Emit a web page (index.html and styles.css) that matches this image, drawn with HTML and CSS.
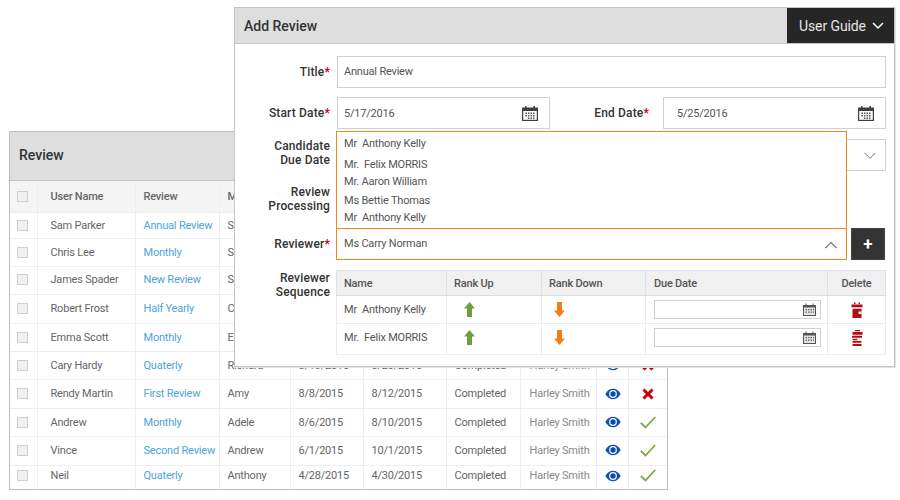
FILE: index.html
```html
<!DOCTYPE html>
<html lang="en">
<head>
<meta charset="utf-8">
<title>Add Review</title>
<link rel="stylesheet" href="styles.css">
</head>
<body>
<svg class="defs" width="0" height="0" aria-hidden="true">
  <symbol id="eye" viewBox="0 0 16 12"><path fill="#0c4eb0" d="M0.3 6C2.5 2.4 5 .8 8 .8s5.5 1.6 7.7 5.2c-2.2 3.6-4.7 5.2-7.700 5.200S2.500 9.600.3 6z"/><circle cx="8" cy="6" r="3.900" fill="#fff"/><circle cx="8" cy="6" r="2.700" fill="#0c4eb0"/></symbol>
  <symbol id="cross" viewBox="0 0 12 12"><path fill="none" stroke="#c8000a" stroke-width="3" d="M1.500 1.500l9 9m0-9l-9 9"/></symbol>
  <symbol id="check" viewBox="0 0 16 13"><path fill="none" stroke="#7aaa3c" stroke-width="1.800" d="M.8 6.800l4.700 4.700L15.200 1"/></symbol>
  <symbol id="cal" viewBox="0 0 16 16"><path fill="#3f3f3f" d="M0 2.500h3V1h1.500v1.500h7V1H13v1.500h3V16H0z"/><path fill="#fff" d="M1.200 6h13.600v8.800H1.200z"/><path fill="#555" d="M3.500 7.500h1.500V9H3.500zM6 7.500h1.500V9H6zM8.500 7.500H10V9H8.500zM11 7.500h1.500V9H11zM3.500 10h1.500v1.500H3.500zM6 10h1.500v1.500H6zM8.500 10H10v1.500H8.500zM11 10h1.500v1.500H11zM6 12.500h1.500V14H6zM8.500 12.500H10V14H8.500zM11 12.500h1.500V14H11z"/></symbol>
  <symbol id="cal-small" viewBox="0 0 13 13"><path fill="#555" d="M0 2h2.500V.5h1V2h6V.5h1V2H13v11H0z"/><path fill="#e3e3e3" d="M1 4.500h11V12H1z"/><path fill="#666" d="M2.500 6h1.500v1.300H2.500zM5 6h1.500v1.300H5zM7.500 6H9v1.300H7.500zM10 6h1.200v1.300H10zM2.500 8.500h1.500v1.300H2.500zM5 8.500h1.500v1.300H5zM7.500 8.500H9v1.300H7.500zM10 8.500h1.200v1.300H10z"/></symbol>
  <symbol id="up" viewBox="0 0 11 15"><path fill="#70a03a" d="M5.500 0L11 6.500H8V15H3V6.500H0z"/></symbol>
  <symbol id="down" viewBox="0 0 11 15"><path fill="#f57c14" d="M3 0h5v8.500h3L5.500 15 0 8.500h3z"/></symbol>
  <symbol id="bin-a" viewBox="0 0 12 16"><path fill="#b40a14" d="M3 .5h1.500V2H3zM7.500 .5H9V2H7.500zM.5 2.500h11v2.700H.5zM1.500 6.700h9V16h-9z"/><path fill="#fff" d="M7.500 9.500h3v2.500h-3z"/></symbol>
  <symbol id="bin-b" viewBox="0 0 12 16"><path fill="#b40a14" d="M4 0h5v1.200H4zM1.500 2h10v2.800h-10zM1 5.800h10v2H1zM1.500 8.800h5v1.400h-5zM1.500 11h9v1.800h-9zM1.500 14h9v2h-9z"/></symbol>
</svg>

<main class="stage">
  <section class="panel panel-back">
    <h2 class="panel-title">Review</h2>
    <table class="grid">
      <colgroup><col class="c-box"><col class="c-user"><col class="c-review"><col class="c-mgr"><col class="c-start"><col class="c-end"><col class="c-status"><col class="c-owner"><col class="c-eye"><col class="c-state"></colgroup>
      <thead>
        <tr><th><span class="box"></span></th><th>User Name</th><th>Review</th><th>Manager</th><th>Start Date</th><th>End Date</th><th>Status</th><th>Owner</th><th>View</th><th>Done</th></tr>
      </thead>
      <tbody>
        <tr><td><span class="box"></span></td><td>Sam Parker</td><td class="link">Annual Review</td><td>Steve</td><td>8/13/2015</td><td>8/20/2015</td><td>Completed</td><td class="owner">Harley Smith</td><td class="mid"><svg class="i-eye"><use href="#eye"/></svg></td><td class="mid"><svg class="i-check"><use href="#check"/></svg></td></tr>
        <tr><td><span class="box"></span></td><td>Chris Lee</td><td class="link">Monthly</td><td>Sara</td><td>8/13/2015</td><td>8/20/2015</td><td>Completed</td><td class="owner">Harley Smith</td><td class="mid"><svg class="i-eye"><use href="#eye"/></svg></td><td class="mid"><svg class="i-check"><use href="#check"/></svg></td></tr>
        <tr><td><span class="box"></span></td><td>James Spader</td><td class="link">New Review</td><td>Sean</td><td>8/13/2015</td><td>8/20/2015</td><td>Completed</td><td class="owner">Harley Smith</td><td class="mid"><svg class="i-eye"><use href="#eye"/></svg></td><td class="mid"><svg class="i-check"><use href="#check"/></svg></td></tr>
        <tr><td><span class="box"></span></td><td>Robert Frost</td><td class="link">Half Yearly</td><td>Chris</td><td>8/13/2015</td><td>8/20/2015</td><td>Completed</td><td class="owner">Harley Smith</td><td class="mid"><svg class="i-eye"><use href="#eye"/></svg></td><td class="mid"><svg class="i-check"><use href="#check"/></svg></td></tr>
        <tr><td><span class="box"></span></td><td>Emma Scott</td><td class="link">Monthly</td><td>Ella</td><td>8/13/2015</td><td>8/20/2015</td><td>Completed</td><td class="owner">Harley Smith</td><td class="mid"><svg class="i-eye"><use href="#eye"/></svg></td><td class="mid"><svg class="i-check"><use href="#check"/></svg></td></tr>
        <tr><td><span class="box"></span></td><td>Cary Hardy</td><td class="link">Quaterly</td><td>Richard</td><td>8/13/2015</td><td>8/20/2015</td><td>Completed</td><td class="owner">Harley Smith</td><td class="mid"><svg class="i-eye"><use href="#eye"/></svg></td><td class="mid"><svg class="i-cross"><use href="#cross"/></svg></td></tr>
        <tr><td><span class="box"></span></td><td>Rendy Martin</td><td class="link">First Review</td><td>Amy</td><td>8/8/2015</td><td>8/12/2015</td><td>Completed</td><td class="owner">Harley Smith</td><td class="mid"><svg class="i-eye"><use href="#eye"/></svg></td><td class="mid"><svg class="i-cross"><use href="#cross"/></svg></td></tr>
        <tr><td><span class="box"></span></td><td>Andrew</td><td class="link">Monthly</td><td>Adele</td><td>8/6/2015</td><td>8/10/2015</td><td>Completed</td><td class="owner">Harley Smith</td><td class="mid"><svg class="i-eye"><use href="#eye"/></svg></td><td class="mid"><svg class="i-check"><use href="#check"/></svg></td></tr>
        <tr><td><span class="box"></span></td><td>Vince</td><td class="link">Second Review</td><td>Andrew</td><td>6/1/2015</td><td>10/1/2015</td><td>Completed</td><td class="owner">Harley Smith</td><td class="mid"><svg class="i-eye"><use href="#eye"/></svg></td><td class="mid"><svg class="i-check"><use href="#check"/></svg></td></tr>
        <tr><td><span class="box"></span></td><td>Neil</td><td class="link">Quaterly</td><td>Anthony</td><td>4/28/2015</td><td>4/30/2015</td><td>Completed</td><td class="owner">Harley Smith</td><td class="mid"><svg class="i-eye"><use href="#eye"/></svg></td><td class="mid"><svg class="i-check"><use href="#check"/></svg></td></tr>
      </tbody>
    </table>
  </section>

  <section class="panel panel-front">
    <header class="front-head">
      <h2 class="front-title">Add Review</h2>
      <div class="guide">User Guide<svg class="guide-chev" viewBox="0 0 12 8"><path fill="none" stroke="#fff" stroke-width="1.500" d="M1 1l5 5 5-5"/></svg></div>
    </header>
    <div class="form">
      <div class="row row-title">
        <label class="lab">Title<b class="req">*</b></label>
        <div class="field grow">Annual Review</div>
      </div>
      <div class="row row-dates">
        <label class="lab">Start Date<b class="req">*</b></label>
        <div class="field date-start">5/17/2016<svg class="i-cal"><use href="#cal"/></svg></div>
        <label class="lab lab-end">End Date<b class="req">*</b></label>
        <div class="field grow end-field">5/25/2016<svg class="i-cal"><use href="#cal"/></svg></div>
      </div>
      <div class="row row-due">
        <label class="lab">Candidate<br>Due Date</label>
        <div class="field date-start"></div>
        <div class="field grow select-right"><svg class="chev" viewBox="0 0 12 8"><path fill="none" stroke="#777" stroke-width="1" d="M.5 .8L6 6.300 11.500 .8"/></svg></div>
      </div>
      <div class="row row-proc">
        <label class="lab">Review<br>Processing</label>
      </div>
      <div class="row row-reviewer">
        <label class="lab">Reviewer<b class="req">*</b></label>
        <div class="field combo">Ms Carry Norman<svg class="chev" viewBox="0 0 12 8"><path fill="none" stroke="#777" stroke-width="1.200" d="M.5 7L6 1.500 11.500 7"/></svg></div>
        <button class="add" type="button">+</button>
      </div>
      <div class="row row-seq">
        <label class="lab">Reviewer<br>Sequence</label>
        <table class="seq">
          <colgroup><col class="s-name"><col class="s-up"><col class="s-down"><col class="s-due"><col class="s-del"></colgroup>
          <thead><tr><th>Name</th><th>Rank Up</th><th>Rank Down</th><th class="due">Due Date</th><th class="ctr">Delete</th></tr></thead>
          <tbody>
            <tr><td>Mr&nbsp; Anthony Kelly</td><td class="arrow"><svg class="i-arrow"><use href="#up"/></svg></td><td class="arrow"><svg class="i-arrow"><use href="#down"/></svg></td><td class="due"><div class="mini"><svg class="i-calm"><use href="#cal-small"/></svg></div></td><td class="ctr"><svg class="i-bin"><use href="#bin-a"/></svg></td></tr>
            <tr><td>Mr.&nbsp; Felix MORRIS</td><td class="arrow"><svg class="i-arrow"><use href="#up"/></svg></td><td class="arrow"><svg class="i-arrow"><use href="#down"/></svg></td><td class="due"><div class="mini"><svg class="i-calm"><use href="#cal-small"/></svg></div></td><td class="ctr"><svg class="i-bin"><use href="#bin-b"/></svg></td></tr>
          </tbody>
        </table>
      </div>
      <ul class="drop">
        <li>Mr&nbsp; Anthony Kelly</li>
        <li>Mr.&nbsp; Felix MORRIS</li>
        <li>Mr. Aaron William</li>
        <li>Ms Bettie Thomas</li>
        <li>Mr&nbsp; Anthony Kelly</li>
      </ul>
    </div>
  </section>
</main>
</body>
</html>
```
FILE: styles.css
```css
* { box-sizing: border-box; }
html, body { margin: 0; padding: 0; background: #fff; }
body { font-family: Roboto, "Noto Sans", sans-serif; font-size: 11px; letter-spacing: -0.2px; color: #555; }
.defs { position: absolute; }
.stage { position: relative; width: 900px; height: 500px; overflow: hidden; }

.panel { position: absolute; background: #fff; }
.panel-back { left: 9px; top: 131px; width: 659px; height: 359px; border: 1px solid #bcbcbc; }
.panel-title { margin: 0; height: 49px; line-height: 47px; padding-left: 9px; background: #dedede; border-bottom: 1px solid #c4c4c4; font-size: 14px; font-weight: 500; letter-spacing: 0; color: #333; }

.grid { border-collapse: collapse; table-layout: fixed; width: 657px; color: #666; }
.c-box { width: 27px; } .c-user { width: 98px; } .c-review { width: 84px; } .c-mgr { width: 71px; }
.c-start { width: 73px; } .c-end { width: 83px; } .c-status { width: 74px; } .c-owner { width: 76px; }
.c-eye { width: 32px; } .c-state { width: 39px; }
.grid th, .grid td { padding: 0 0 0 8px; border: 1px solid #eee; border-top: 0; text-align: left; white-space: nowrap; overflow: hidden; font-weight: 400; }
.grid th:first-child, .grid td:first-child { border-left: 0; padding-left: 7px; }
.grid th:last-child, .grid td:last-child { border-right: 0; }
.grid th { height: 31px; padding-top: 1px; background: #f4f4f4; font-weight: 500; color: #666; }
.grid th:nth-child(2), .grid td:nth-child(2) { padding-left: 13px; }
.grid tbody tr { height: 28px; }
.grid tbody tr:nth-child(1) { height: 26px; }
.grid tbody tr:nth-child(4), .grid tbody tr:nth-child(7), .grid tbody tr:nth-child(9) { height: 29px; }
.grid tbody tr:nth-child(10) { height: 24px; }
.grid tbody tr:nth-child(3) td, .grid tbody tr:nth-child(9) td { padding-bottom: 1px; }
.grid tbody tr:nth-child(5) td { padding-top: 1px; }
.grid tbody tr:nth-child(10) td { padding-bottom: 3px; }
.grid tbody tr:last-child td { border-bottom: 0; }
.grid .link { color: #4da3db; }
.grid .owner { padding-left: 9px; color: #888; }
.grid .mid { padding-left: 0; text-align: center; }
.grid .mid:nth-child(9) { padding-left: 1px; }
.box { display: block; width: 11px; height: 11px; background: #f0f0f0; border: 1px solid #cfcfcf; }
.i-eye { display: block; width: 16px; height: 12px; margin: 0 auto; }
.i-cross { display: block; width: 12px; height: 12px; margin: 0 auto; }
.i-check { display: block; width: 16px; height: 13px; margin: 0 auto; }

.panel-front { left: 234px; top: 7px; width: 661px; height: 360px; border: 1px solid #c4c4c4; box-shadow: 1px 1px 0 #e2e2e2; }
.front-head { display: flex; justify-content: space-between; height: 36px; background: #dedede; border-bottom: 1px solid #c8c8c8; }
.front-title { margin: 0; padding-left: 9px; line-height: 36px; font-size: 14px; font-weight: 500; letter-spacing: 0; color: #333; }
.guide { display: flex; align-items: center; gap: 6px; width: 107px; height: 35px; padding-left: 12px; background: #262626; color: #e4e4e4; font-size: 14px; letter-spacing: -0.1px; }
.guide-chev { width: 12px; height: 8px; }

.form { position: relative; padding: 12px 8px 0 0; display: flex; flex-direction: column; }
.row { display: flex; align-items: flex-start; }
.lab { flex: none; width: 95px; padding-top: 9px; text-align: right; font-size: 12px; font-weight: 500; letter-spacing: 0.15px; color: #333; line-height: 14px; }
.req { color: #c8000a; font-weight: 700; }
.field { position: relative; flex: none; height: 32px; margin-left: 7px; padding-left: 6px; line-height: 30px; background: #fff; border: 1px solid #d0d0d0; color: #555; }
.grow { flex: 1; }
.date-start { width: 213px; }
.lab-end { width: 99px; }
.end-field { margin-left: 14px; padding-left: 13px; }
.row-dates .field { line-height: 32px; }
.select-right { margin-left: 113px; }
.row-dates { margin-top: 9px; }
.row-due { margin-top: 10px; }
.row-due .lab { padding-top: 0; }
.row-proc { height: 32px; margin-top: 12px; }
.row-proc .lab { padding-top: 2px; }
.row-reviewer { margin-top: 13px; }
.row-seq { margin-top: 10px; }
.row-seq .lab { padding-top: 1px; }
.i-cal { position: absolute; right: 11px; top: 7px; width: 16px; height: 16px; }
.chev { position: absolute; right: 9px; top: 12px; width: 12px; height: 8px; }
.combo { width: 511px; margin-left: 6px; padding-left: 7px; border-color: #f08a1c; }
.add { flex: none; width: 34px; height: 32px; margin-left: 4px; padding: 0; background: #333; border: 1px solid #444; color: #fff; font: 700 17px/28px Roboto, sans-serif; }

.seq { flex: none; width: 549px; height: 84px; margin-left: 6px; border-collapse: collapse; table-layout: fixed; border: 1px solid #d5d5d5; }
.s-name { width: 110px; } .s-up { width: 95px; } .s-down { width: 104px; } .s-due { width: 182px; } .s-del { width: 58px; }
.seq th, .seq td { padding: 0 0 0 7px; border: 1px solid #ececec; text-align: left; font-weight: 400; white-space: nowrap; }
.seq th { height: 25px; padding-top: 1px; background: #f0f0f0; border-color: #e0e0e0; border-bottom-color: #ddd; font-weight: 500; color: #555; }
.seq tbody tr:nth-child(1) td { height: 28px; }
.seq tbody tr:nth-child(2) td { height: 31px; padding-bottom: 3px; }
.seq .due, .seq th.due { padding-left: 8px; }
.seq .ctr, .seq th.ctr { padding-left: 0; text-align: center; }
.seq .arrow { padding-left: 17px; }
.seq td:nth-child(3).arrow { padding-left: 12px; }
.i-arrow { display: block; width: 11px; height: 15px; }
.mini { position: relative; width: 167px; height: 19px; border: 1px solid #d0d0d0; }
.i-calm { position: absolute; right: 4px; top: 2px; width: 13px; height: 13px; }
.i-bin { display: block; width: 12px; height: 16px; margin: 0 auto; }

.drop { position: absolute; left: 101px; top: 87px; width: 511px; height: 97px; margin: 0; padding: 0; list-style: none; background: #fff; border: 1px solid #f08a1c; border-bottom: 0; color: #555; }
.drop li { height: 18px; padding-left: 7px; line-height: 18px; white-space: pre; }
.drop li:nth-child(1) { height: 24px; line-height: 24px; }
.drop li:nth-child(2) { height: 17px; line-height: 17px; }
.drop li:nth-child(4) { height: 20px; line-height: 20px; }
.drop li:nth-child(5) { height: 14px; line-height: 14px; }
```
